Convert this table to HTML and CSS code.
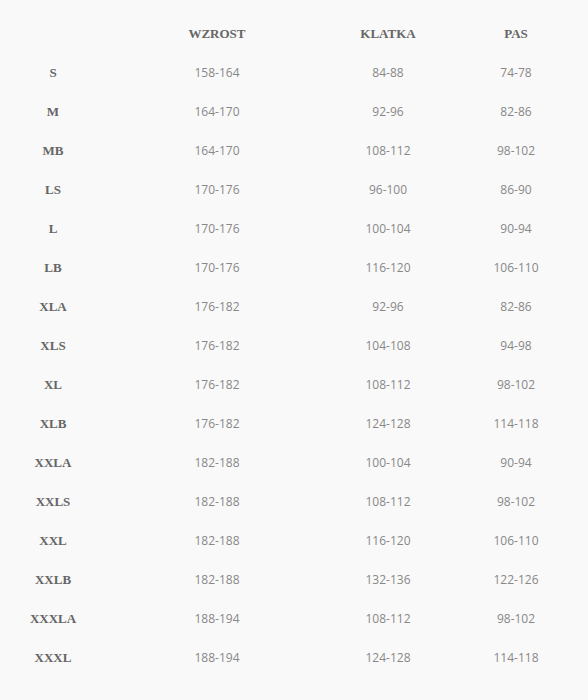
FILE: index.html
```html
<!DOCTYPE html>
<html lang="pl">
<head>
<meta charset="utf-8">
<link rel="stylesheet" href="styles.css">
</head>
<body>
<div class="chart">
  <div class="row head"><span></span><span>WZROST</span><span>KLATKA</span><span>PAS</span></div>
  <div class="row"><span class="size">S</span><span>158-164</span><span>84-88</span><span>74-78</span></div>
  <div class="row"><span class="size">M</span><span>164-170</span><span>92-96</span><span>82-86</span></div>
  <div class="row"><span class="size">MB</span><span>164-170</span><span>108-112</span><span>98-102</span></div>
  <div class="row"><span class="size">LS</span><span>170-176</span><span>96-100</span><span>86-90</span></div>
  <div class="row"><span class="size">L</span><span>170-176</span><span>100-104</span><span>90-94</span></div>
  <div class="row"><span class="size">LB</span><span>170-176</span><span>116-120</span><span>106-110</span></div>
  <div class="row"><span class="size">XLA</span><span>176-182</span><span>92-96</span><span>82-86</span></div>
  <div class="row"><span class="size">XLS</span><span>176-182</span><span>104-108</span><span>94-98</span></div>
  <div class="row"><span class="size">XL</span><span>176-182</span><span>108-112</span><span>98-102</span></div>
  <div class="row"><span class="size">XLB</span><span>176-182</span><span>124-128</span><span>114-118</span></div>
  <div class="row"><span class="size">XXLA</span><span>182-188</span><span>100-104</span><span>90-94</span></div>
  <div class="row"><span class="size">XXLS</span><span>182-188</span><span>108-112</span><span>98-102</span></div>
  <div class="row"><span class="size">XXL</span><span>182-188</span><span>116-120</span><span>106-110</span></div>
  <div class="row"><span class="size">XXLB</span><span>182-188</span><span>132-136</span><span>122-126</span></div>
  <div class="row"><span class="size">XXXLA</span><span>188-194</span><span>108-112</span><span>98-102</span></div>
  <div class="row"><span class="size">XXXL</span><span>188-194</span><span>124-128</span><span>114-118</span></div>
</div>
</body>
</html>
```
FILE: styles.css
```css
html, body {
  margin: 0;
  padding: 0;
  background: #f9f9f9;
}
body {
  width: 588px;
  height: 700px;
  overflow: hidden;
}
.chart {
  padding-top: 14px;
}
.row {
  display: grid;
  grid-template-columns: 106px 222px 120px 136px;
  height: 39px;
  align-items: center;
  text-align: center;
  font-family: "Open Sans", sans-serif;
  font-size: 12px;
  color: #888;
}
.head span,
.size {
  font-family: "Liberation Serif", serif;
  font-weight: bold;
  font-size: 13px;
  color: #666;
}
```
